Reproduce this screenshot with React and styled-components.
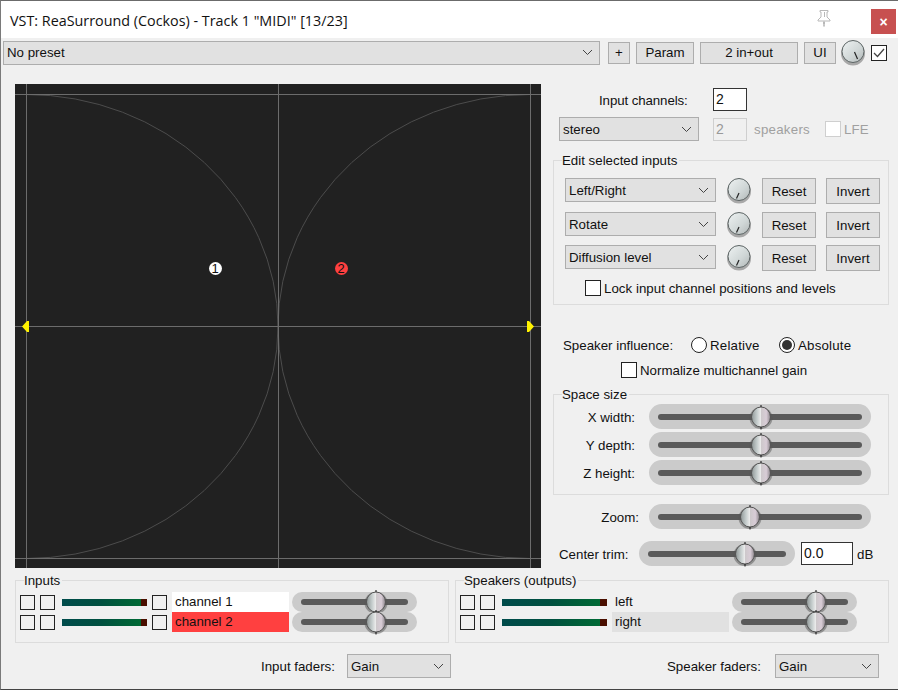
import React from "react";
import styled, { createGlobalStyle } from "styled-components";

const Global = createGlobalStyle`
  html, body { margin: 0; padding: 0; background: #f0f0f0; overflow: hidden; }
  * { box-sizing: border-box; }
`;

const Window = styled.div`
  width: 898px;
  height: 690px;
  background: #f0f0f0;
  border-top: 1px solid #6b6b6b;
  border-left: 1px solid #7a7a7a;
  border-bottom: 1px solid #444;
  display: flex;
  flex-direction: column;
  font-family: "Liberation Sans", Arial, sans-serif;
  font-size: 13px;
  color: #111;
`;
const TitleBar = styled.header`
  height: 37px;
  background: #fff;
  display: flex;
  align-items: center;
  padding: 0 2px 0 9px;
`;
const Title = styled.div`
  font-family: "Open Sans", sans-serif;
  font-size: 14.35px;
  color: #111;
  flex: 1;
  margin-top: 2px;
`;
const PinSlot = styled.div`
  display: flex;
  margin-bottom: 3px;
`;
const Close = styled.div`
  width: 25px;
  height: 25px;
  margin-top: 4px;
  margin-left: 40px;
  background: #c75050;
  color: #fff;
  font-weight: 700;
  font-size: 14px;
  display: flex;
  align-items: center;
  justify-content: center;
`;
const Toolbar = styled.div`
  display: flex;
  align-items: center;
  height: 25px;
  margin-top: 2px;
  padding-left: 2px;
`;
const SelectBox = styled.div`
  width: ${(p) => p.$w}px;
  height: 24px;
  flex: none;
  background: #e1e1e1;
  border: 1px solid #adadad;
  padding: 0 6px 0 3px;
  display: flex;
  align-items: center;
  justify-content: space-between;
  font-size: 13.3px;
  svg { flex: none; }
`;
const Btn = styled.div`
  width: ${(p) => p.$w}px;
  height: ${(p) => p.$h || 26}px;
  margin-left: ${(p) => p.$ml || 0}px;
  flex: none;
  background: #e1e1e1;
  border: 1px solid #adadad;
  display: flex;
  align-items: center;
  justify-content: center;
  font-size: 13.3px;
`;
const CheckBox = styled.div`
  width: ${(p) => p.$s || 16}px;
  height: ${(p) => p.$s || 16}px;
  flex: none;
  border: 1px solid ${(p) => (p.$off ? "#cfcfcf" : "#222")};
  background: ${(p) => (p.$clear ? "transparent" : "#fff")};
  margin-left: ${(p) => p.$ml || 0}px;
  display: flex;
  align-items: center;
  justify-content: center;
`;
const Main = styled.div`
  display: flex;
  padding: 0 0 0 14px;
  margin-top: 19px;
`;
const Field = styled.div`
  position: relative;
  width: 526px;
  height: 484px;
  flex: none;
  background: #212121;
  svg { display: block; }
`;
const Node = styled.div`
  position: absolute;
  left: ${(p) => p.$x - 6.5}px;
  top: ${(p) => p.$y - 6.5}px;
  width: 13px;
  height: 13px;
  border-radius: 50%;
  background: ${(p) => p.$c};
  color: #111;
  font-size: 13px;
  line-height: 13px;
  text-align: center;
`;
const Side = styled.div`
  width: 336px;
  margin-left: 12px;
  flex: none;
`;
const Row = styled.div`
  display: flex;
  align-items: ${(p) => (p.$top ? "flex-start" : "center")};
  height: ${(p) => p.$h}px;
  margin-top: ${(p) => p.$mt || 0}px;
  padding-left: ${(p) => p.$pl || 0}px;
`;
const Label = styled.span`
  width: ${(p) => (p.$w ? p.$w + "px" : "auto")};
  margin-left: ${(p) => p.$ml || 0}px;
  padding-top: ${(p) => p.$pt || 0}px;
  flex: none;
  text-align: ${(p) => p.$align || "left"};
  color: ${(p) => (p.$off ? "#a0a0a0" : "inherit")};
  font-size: 13.3px;
  letter-spacing: ${(p) => p.$ls || 0}px;
  white-space: nowrap;
`;
const Input = styled.div`
  width: ${(p) => p.$w}px;
  height: 23px;
  flex: none;
  border: 1px solid ${(p) => (p.$off ? "#cfcfcf" : p.$dark ? "#333" : "#7a7a7a")};
  background: ${(p) => (p.$off ? "#f0f0f0" : "#fff")};
  color: ${(p) => (p.$off ? "#999" : "#111")};
  margin-left: ${(p) => p.$ml || 0}px;
  padding-left: 2px;
  font-size: 14px;
  line-height: 21px;
`;
const Group = styled.section`
  position: relative;
  width: ${(p) => p.$w || 336}px;
  height: ${(p) => p.$h}px;
  flex: none;
  margin-top: ${(p) => p.$mt || 0}px;
  margin-left: ${(p) => p.$ml || 0}px;
  border: 1px solid #dcdcdc;
`;
const Legend = styled.span`
  position: absolute;
  left: 8px;
  top: -8px;
  padding: 0 2px 0 0;
  background: #f0f0f0;
  font-size: 13.3px;
  line-height: 16px;
`;
const GroupBody = styled.div`
  padding: ${(p) => p.$pad};
`;
const Radio = styled.div`
  width: 16px;
  height: 16px;
  flex: none;
  border-radius: 50%;
  border: 1px solid #222;
  background: #fff;
  margin-left: ${(p) => p.$ml || 0}px;
  display: flex;
  align-items: center;
  justify-content: center;
  &::after {
    content: "";
    display: ${(p) => (p.$on ? "block" : "none")};
    width: 10px;
    height: 10px;
    border-radius: 50%;
    background: #333;
  }
`;
const Track = styled.div`
  position: relative;
  width: ${(p) => p.$w}px;
  height: ${(p) => p.$h || 25}px;
  flex: none;
  margin-left: ${(p) => p.$ml || 0}px;
  background: #cbcbcb;
  border-radius: 13px;
  &::before {
    content: "";
    position: absolute;
    left: 9px;
    right: 9px;
    top: 50%;
    height: 6px;
    margin-top: -3px;
    background: #5a5a5a;
    border-radius: 3px;
  }
  svg {
    position: absolute;
    left: ${(p) => p.$knob - 12}px;
    top: 50%;
    margin-top: -14px;
  }
`;
const GroupsRow = styled.div`
  display: flex;
  padding-left: 14px;
  margin-top: 12px;
`;
const ChannelRow = styled.div`
  display: flex;
  align-items: center;
  height: 20px;
  padding-left: 4px;
`;
const Meter = styled.div`
  width: ${(p) => p.$w}px;
  height: 7px;
  flex: none;
  margin-left: 7px;
  background: linear-gradient(90deg, #004b4b 0, #00503f ${(p) => p.$split / 2}px, #006a35 ${(p) => p.$split}px, #4a0f00 ${(p) => p.$split}px);
`;
const Name = styled.div`
  width: 117px;
  height: 20px;
  flex: none;
  margin-left: ${(p) => p.$ml}px;
  padding-left: 3px;
  background: ${(p) => p.$bg};
  line-height: 20px;
  font-size: 13.3px;
`;
const Footer = styled.div`
  display: flex;
  align-items: center;
  height: 24px;
  margin-top: 11px;
  padding-left: 260px;
`;

const Chevron = () => (
  <svg width="11" height="7" viewBox="0 0 11 7">
    <path d="M1 1l4.5 4.5L10 1" fill="none" stroke="#444" strokeWidth="1" />
  </svg>
);
const Select = ({ w, children }) => (
  <SelectBox $w={w}>
    <span>{children}</span>
    <Chevron />
  </SelectBox>
);
const Knob = ({ d, ml = 0 }) => (
  <svg width="24" height="26" viewBox="0 0 24 26" style={{ flex: "none", marginLeft: ml }}>
    <defs>
      <linearGradient id="kf" x1="0" y1="0" x2="1" y2="1">
        <stop offset="0" stopColor="#eef2f2" />
        <stop offset="0.6" stopColor="#cfd6d6" />
        <stop offset="1" stopColor="#b0b6b6" />
      </linearGradient>
    </defs>
    <ellipse cx="12" cy="13.5" rx="12" ry="12" fill="#a8a8a8" />
    <circle cx="12" cy="11.5" r="11" fill="url(#kf)" stroke="#5c6464" strokeWidth="1" />
    <path d={d} stroke="#222" strokeWidth="1.2" fill="none" />
  </svg>
);
const Thumb = () => (
  <svg width="24" height="28" viewBox="0 0 24 28">
    <defs>
      <linearGradient id="th" x1="0" y1="0" x2="1" y2="0">
        <stop offset="0" stopColor="#8f9696" />
        <stop offset="0.28" stopColor="#c3cbcb" />
        <stop offset="0.49" stopColor="#ececec" />
        <stop offset="0.52" stopColor="#cdc8cb" />
        <stop offset="0.78" stopColor="#d8ccd6" />
        <stop offset="1" stopColor="#8d878c" />
      </linearGradient>
    </defs>
    <ellipse cx="12" cy="15" rx="11.5" ry="11" fill="#555" opacity="0.5" />
    <ellipse cx="12" cy="14" rx="9.5" ry="10" fill="url(#th)" stroke="#555" strokeWidth="1" />
    <path d="M12 2v2M12 24v2.5" stroke="#111" strokeWidth="1" />
  </svg>
);
const Slider = ({ w, knob, ml, h }) => (
  <Track $w={w} $knob={knob} $ml={ml} $h={h}>
    <Thumb />
  </Track>
);
const Pin = () => (
  <svg width="14" height="17" viewBox="0 0 14 17" fill="none" stroke="#b8b8b8" strokeWidth="1">
    <path d="M3 .5h8v1.5h-1v5l3 3v1H1v-1l3-3V2H3zM6.5 11.5v3l.5 2 .5-2v-3M7.5 2v5" />
  </svg>
);
const FieldDrawing = () => (
  <svg width="526" height="484" viewBox="0 0 526 484">
    <g fill="none" stroke="#4c4c4c" strokeWidth="1">
      <path d="M11 10.5A252 232 0 0 1 263 242.5A252 232 0 0 1 515 10.5" />
      <path d="M11 474.5A252 232 0 0 0 263 242.5A252 232 0 0 0 515 474.5" />
    </g>
    <path d="M0 10.5H526M0 474.5H526M0 242.5H526M11.5 0V484M263.5 0V484M515.5 0V484" stroke="#6c6c6c" fill="none" />
    <path d="M7 242.5L12 237H14V248H12ZM519 242.5L514 237H512V248H514Z" fill="#fff200" />
  </svg>
);

const editRows = [
  { label: "Left/Right", mt: 17 },
  { label: "Rotate", mt: 8 },
  { label: "Diffusion level", mt: 7 },
];
const spaceRows = [
  { label: "X width:", mt: 9 },
  { label: "Y depth:", mt: 3 },
  { label: "Z height:", mt: 3 },
];

const Channel = ({ split, w, third, name, nameBg }) => (
  <ChannelRow>
    <CheckBox $s={15} $clear />
    <CheckBox $s={15} $clear $ml={5} />
    <Meter $w={w} $split={split} />
    {third && <CheckBox $s={15} $clear $ml={5} />}
    <Name $bg={nameBg} $ml={5}>{name}</Name>
    <Slider w={125} h={20} knob={84} ml={3} />
  </ChannelRow>
);

export default function App() {
  return (
    <Window>
      <Global />
      <TitleBar>
        <Title>VST: ReaSurround (Cockos) - Track 1 "MIDI" [13/23]</Title>
        <PinSlot><Pin /></PinSlot>
        <Close>×</Close>
      </TitleBar>
      <Toolbar>
        <Select w={597}>No preset</Select>
        <Btn $w={22} $h={22} $ml={8}>+</Btn>
        <Btn $w={58} $h={22} $ml={6}>Param</Btn>
        <Btn $w={98} $h={22} $ml={6}>2 in+out</Btn>
        <Btn $w={32} $h={22} $ml={6}>UI</Btn>
        <Knob d="M13.5 12l3 7" ml={5} />
        <CheckBox $ml={6}>
          <svg width="12" height="10" viewBox="0 0 12 10">
            <path d="M1 5l3.5 3.5L11 1" fill="none" stroke="#444" strokeWidth="1.3" />
          </svg>
        </CheckBox>
      </Toolbar>
      <Main>
        <Field>
          <FieldDrawing />
          <Node $x={200} $y={184} $c="#fff">1</Node>
          <Node $x={326} $y={184} $c="#ff4040">2</Node>
        </Field>
        <Side>
          <Row $h={23} $mt={4} $pl={46}>
            <Label $w={114} $ls={-0.1} $pt={2}>Input channels:</Label>
            <Input $w={34} $dark>2</Input>
          </Row>
          <Row $h={24} $mt={6} $pl={6}>
            <Select w={140}>stereo</Select>
            <Input $w={34} $off $ml={14}>2</Input>
            <Label $off $ml={7} $w={56} $ls={0.25} $pt={1}>speakers</Label>
            <CheckBox $off $ml={15} />
            <Label $off $ml={3} $ls={0.1} $pt={1}>LFE</Label>
          </Row>
          <Group $h={145} $mt={19}>
            <Legend>Edit selected inputs</Legend>
            <GroupBody $pad="0 0 0 11px">
              {editRows.map((r) => (
                <Row key={r.label} $top $h={26} $mt={r.mt}>
                  <Select w={151}>{r.label}</Select>
                  <Knob d="M9.5 20.5L12 15" ml={11} />
                  <Btn $w={54} $ml={11}>Reset</Btn>
                  <Btn $w={54} $ml={10}>Invert</Btn>
                </Row>
              ))}
              <Row $h={16} $mt={9} $pl={20}>
                <CheckBox />
                <Label $ml={3} $ls={0.03}>Lock input channel positions and levels</Label>
              </Row>
            </GroupBody>
          </Group>
          <Row $h={16} $mt={32} $pl={10}>
            <Label $w={128}>Speaker influence:</Label>
            <Radio />
            <Label $ml={3} $w={50} $ls={0.2}>Relative</Label>
            <Radio $on $ml={19} />
            <Label $ml={3} $ls={0.2}>Absolute</Label>
          </Row>
          <Row $h={16} $mt={9} $pl={68}>
            <CheckBox />
            <Label $ml={3}>Normalize multichannel gain</Label>
          </Row>
          <Group $h={101} $mt={16}>
            <Legend>Space size</Legend>
            {spaceRows.map((r) => (
              <Row key={r.label} $h={25} $mt={r.mt}>
                <Label $w={81} $align="right" $pt={2}>{r.label}</Label>
                <Slider w={222} knob={112} ml={14} />
              </Row>
            ))}
          </Group>
          <Row $h={25} $mt={9}>
            <Label $w={86} $align="right" $pt={2}>Zoom:</Label>
            <Slider w={222} knob={101} ml={10} />
          </Row>
          <Row $h={25} $mt={12} $pl={6}>
            <Label $w={80} $pt={2}>Center trim:</Label>
            <Slider w={156} knob={106} />
            <Input $w={52} $dark $ml={6}>0.0</Input>
            <Label $ml={4} $pt={2}>dB</Label>
          </Row>
        </Side>
      </Main>
      <GroupsRow>
        <Group $w={434} $h={63}>
          <Legend>Inputs</Legend>
          <GroupBody $pad="11px 0 0 0">
            <Channel w={85} split={79} third name="channel 1" nameBg="#fff" />
            <Channel w={85} split={79} third name="channel 2" nameBg="#ff4040" />
          </GroupBody>
        </Group>
        <Group $w={434} $h={63} $ml={6}>
          <Legend>Speakers (outputs)</Legend>
          <GroupBody $pad="11px 0 0 0">
            <Channel w={105} split={98} name="left" nameBg="transparent" />
            <Channel w={105} split={98} name="right" nameBg="#e1e1e1" />
          </GroupBody>
        </Group>
      </GroupsRow>
      <Footer>
        <Label $w={86}>Input faders:</Label>
        <Select w={104}>Gain</Select>
        <Label $w={108} $ml={216}>Speaker faders:</Label>
        <Select w={104}>Gain</Select>
      </Footer>
    </Window>
  );
}
